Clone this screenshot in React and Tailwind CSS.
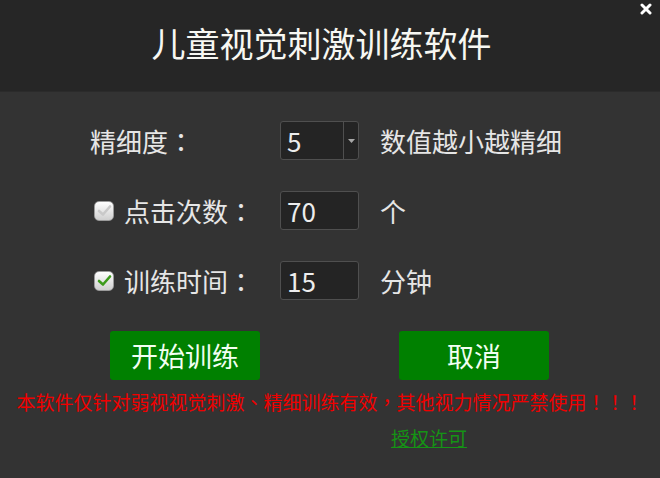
import { useState } from 'react';

const font = { fontFamily: '"Noto Sans CJK SC", "Noto Sans", sans-serif' };
// centred full-width punctuation, as in the original
const punct = { fontFamily: '"Noto Sans CJK TC", "Noto Sans CJK SC", sans-serif' };

const P = ({ children }) => <span style={punct}>{children}</span>;

const Check = ({ on, onToggle }) => (
  <div
    onClick={onToggle}
    className="w-[20px] h-[20px] rounded-[5px] border border-[#9a9a9a] bg-gradient-to-b from-[#ffffff] to-[#cfcfcf] flex items-center justify-center cursor-pointer"
  >
    <svg width="15" height="13" viewBox="0 0 15 13">
      <path
        d="M2 7 L6 10.5 L13 2.5"
        fill="none"
        stroke={on ? '#3d9b1c' : '#c9c9c9'}
        strokeWidth="2.6"
        strokeLinecap="round"
        strokeLinejoin="round"
      />
    </svg>
  </div>
);

const Field = ({ value, select }) => (
  <div className="w-[79px] h-[39px] border border-[#4f4f4f] bg-[#242424] rounded-[3px] flex items-center shrink-0">
    <span className="flex-1 pl-[6px] text-[26px] leading-none text-[#ededed]">{value}</span>
    {select && (
      <div className="w-[15px] h-full border-l border-[#4f4f4f] flex items-center justify-center">
        <svg width="7" height="4" viewBox="0 0 7 4">
          <path d="M0 0 L7 0 L3.5 4 Z" fill="#a8a8a8" />
        </svg>
      </div>
    )}
  </div>
);

export default function App() {
  const [useCount, setUseCount] = useState(false);
  const [useTime, setUseTime] = useState(true);

  return (
    <div style={font} className="w-[660px] h-[478px] bg-[#333333] relative overflow-hidden">
      {/* header */}
      <div className="h-[92px] bg-[#262626] border-b border-[#2b2b2b] flex items-center justify-center">
        <h1 className="text-[34px] leading-none text-[#f7f7f2] -mt-[5px] -ml-[17px]">儿童视觉刺激训练软件</h1>
      </div>
      <button className="absolute top-[3px] right-[8px] w-[12px] h-[12px]">
        <svg width="12" height="12" viewBox="0 0 12 12">
          <path d="M2 2 L10 10 M10 2 L2 10" stroke="#ffffff" strokeWidth="3" strokeLinecap="round" />
        </svg>
      </button>

      {/* form rows */}
      <div className="pt-[29px] pl-[90px] flex flex-col gap-[31px] text-[#e6e6e6]">
        <div className="flex items-center h-[39px]">
          <div className="w-[190px] text-[26px] leading-none">精细度<P>：</P></div>
          <Field value="5" select />
          <div className="ml-[21px] text-[26px] leading-none">数值越小越精细</div>
        </div>
        <div className="flex items-center h-[39px]">
          <div className="w-[190px] flex items-center">
            <div className="ml-[4px]">
              <Check on={useCount} onToggle={() => setUseCount((p) => !p)} />
            </div>
            <span className="ml-[10px] text-[26px] leading-none">点击次数<P>：</P></span>
          </div>
          <Field value="70" />
          <div className="ml-[21px] text-[26px] leading-none">个</div>
        </div>
        <div className="flex items-center h-[39px]">
          <div className="w-[190px] flex items-center">
            <div className="ml-[4px]">
              <Check on={useTime} onToggle={() => setUseTime((p) => !p)} />
            </div>
            <span className="ml-[10px] text-[26px] leading-none">训练时间<P>：</P></span>
          </div>
          <Field value="15" />
          <div className="ml-[21px] text-[26px] leading-none">分钟</div>
        </div>
      </div>

      {/* buttons */}
      <div className="flex mt-[31px] pl-[110px] gap-[139px]">
        <button className="w-[150px] h-[49px] bg-[#008000] rounded-[3px] text-[27px] leading-none text-[#f2fff2]">开始训练</button>
        <button className="w-[150px] h-[49px] bg-[#008000] rounded-[3px] text-[27px] leading-none text-[#f2fff2]">取消</button>
      </div>

      <p className="mt-[12px] text-center text-[19px] leading-none text-[#f00000] whitespace-nowrap">
        本软件仅针对弱视视觉刺激<P>、</P>精细训练有效<P>，</P>其他视力情况严禁使用<P>！！！</P>
      </p>
      <div className="mt-[16px] pl-[391px]">
        <a href="#" className="text-[19px] leading-none text-[#159315] underline">授权许可</a>
      </div>
    </div>
  );
}
